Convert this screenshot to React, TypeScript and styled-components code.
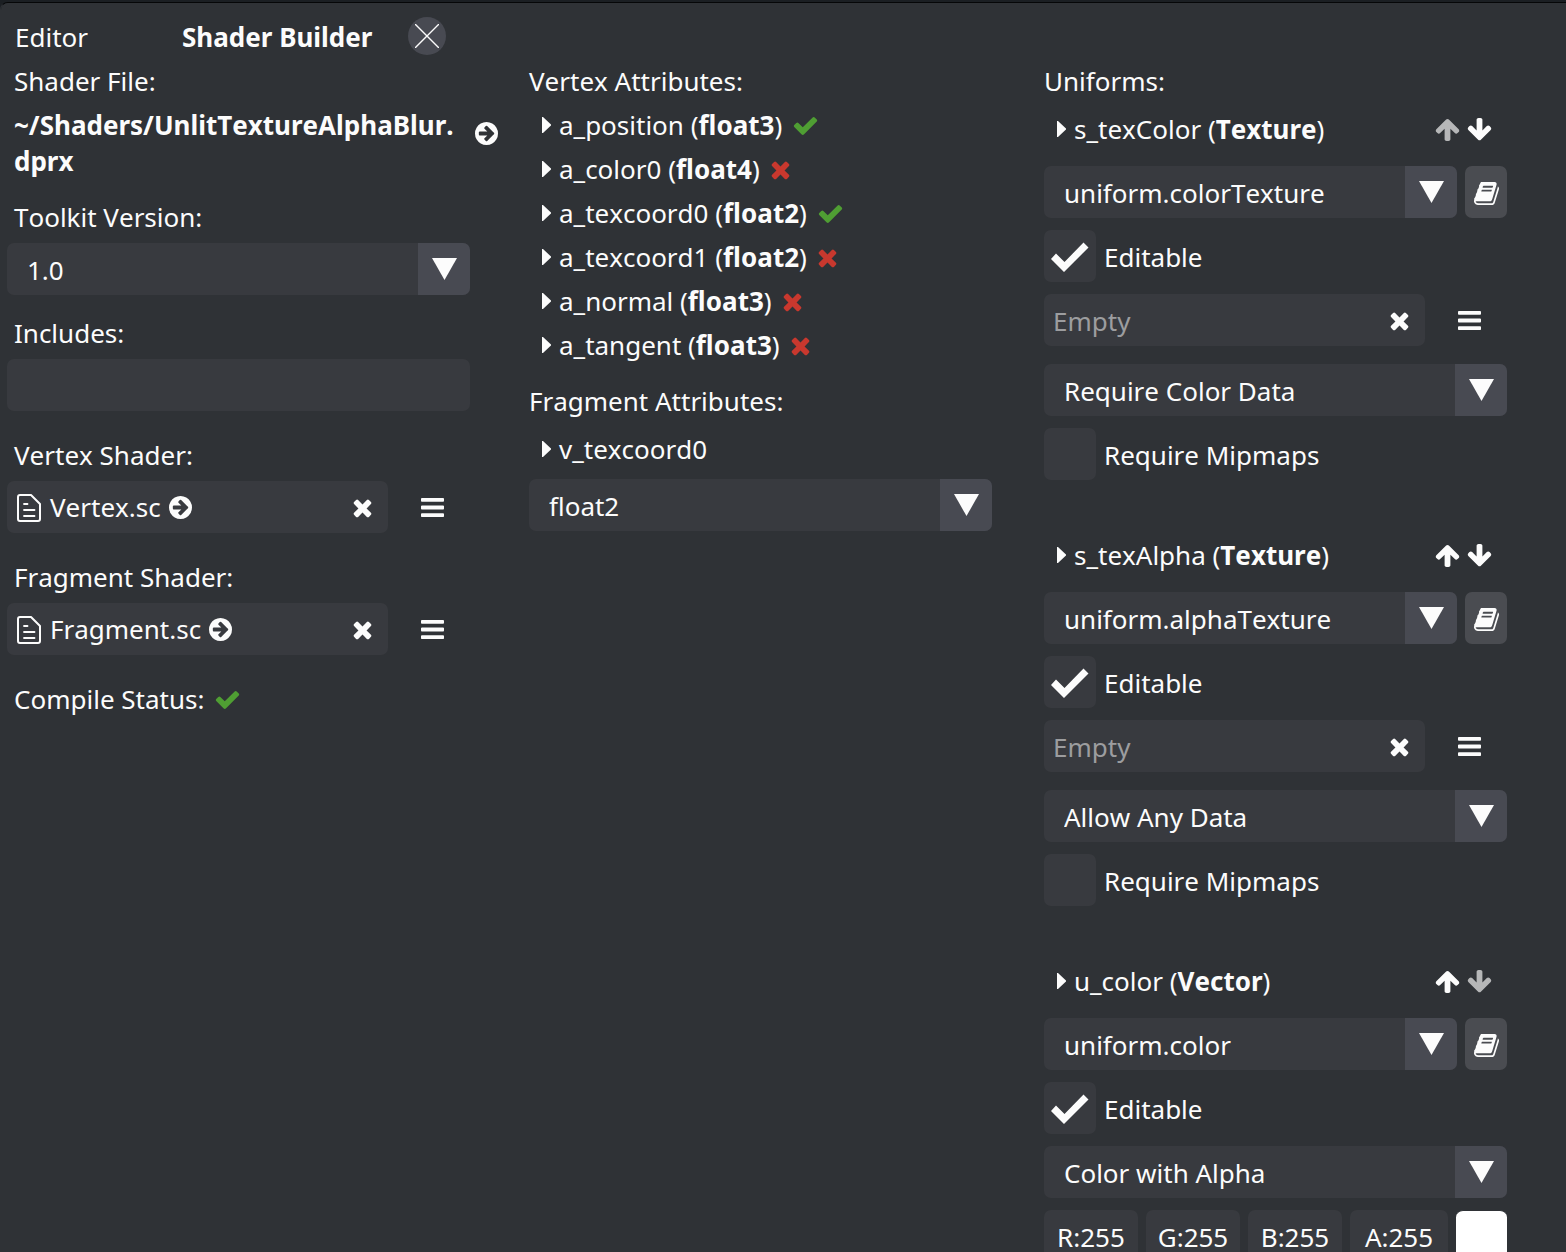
import React, { useId, useState } from "react";
import styled, { createGlobalStyle } from "styled-components";

const color = {
  frame: "#1b1f23",
  edge: "#060708",
  panel: "#2f3236",
  field: "#383a3f",
  arrow: "#484a52",
  button: "#4a4c51",
  text: "#fcfcfc",
  muted: "#9c9d9f",
  ok: "#4f9e33",
  bad: "#c8382e",
};

const GlobalStyle = createGlobalStyle`
  *, *::before, *::after { box-sizing: border-box; }
  body { margin: 0; background: ${color.frame}; }
  body, button, input, select {
    font: 400 26px/36px "Noto Sans", "Open Sans", sans-serif;
    font-kerning: none;
    color: ${color.text};
  }
`;

/* ---------- icons ---------- */

const glyphs = {
  check: {
    box: "0 0 1792 1792",
    width: 27,
    d: "M1671 566q0 40-28 68l-724 724-136 136q-28 28-68 28t-68-28l-136-136-362-362q-28-28-28-68t28-68l136-136q28-28 68-28t68 28l294 295 656-657q28-28 68-28t68 28l136 136q28 28 28 68z",
  },
  times: {
    box: "192 0 1408 1792",
    width: 21,
    d: "M1490 1322q0 40-28 68l-136 136q-28 28-68 28t-68-28l-294-294-294 294q-28 28-68 28t-68-28l-136-136q-28-28-28-68t28-68l294-294-294-294q-28-28-28-68t28-68l136-136q28-28 68-28t68 28l294 294 294-294q28-28 68-28t68 28l136 136q28 28 28 68t-28 68l-294 294 294 294q28 28 28 68z",
  },
  goto: {
    box: "128 0 1536 1792",
    width: 23,
    d: "M1413 896q0-27-18-45l-91-91-362-362q-18-18-45-18t-45 18l-91 91q-18 18-18 45t18 45l189 189h-502q-26 0-45 19t-19 45v128q0 26 19 45t45 19h502l-189 189q-19 19-19 45t19 45l91 91q18 18 45 18t45-18l362-362 91-91q18-18 18-45zm251 0q0 209-103 385.5t-279.5 279.5-385.5 103-385.5-103-279.5-279.5-103-385.5 103-385.5 279.5-279.5 385.5-103 385.5 103 279.5 279.5 103 385.5z",
  },
  bars: {
    box: "128 0 1536 1792",
    width: 23,
    d: "M1664 1344v128q0 26-19 45t-45 19h-1408q-26 0-45-19t-19-45v-128q0-26 19-45t45-19h1408q26 0 45 19t19 45zm0-512v128q0 26-19 45t-45 19h-1408q-26 0-45-19t-19-45v-128q0-26 19-45t45-19h1408q26 0 45 19t19 45zm0-512v128q0 26-19 45t-45 19h-1408q-26 0-45-19t-19-45v-128q0-26 19-45t45-19h1408q26 0 45 19t19 45z",
  },
  up: {
    box: "0 0 1792 1792",
    width: 27,
    d: "M1675 971q0 51-37 90l-75 75q-38 38-91 38-54 0-90-38l-294-293v704q0 52-37.5 84.5t-90.5 32.5h-128q-53 0-90.5-32.5t-37.5-84.5v-704l-294 293q-36 38-90 38t-90-38l-75-75q-38-38-38-90 0-53 38-91l651-651q35-37 90-37 54 0 91 37l651 651q37 39 37 91z",
  },
  down: {
    box: "0 0 1792 1792",
    width: 27,
    d: "M1675 832q0 53-37 90l-651 652q-39 37-91 37-53 0-90-37l-651-652q-38-36-38-90 0-53 38-91l74-75q39-37 91-37 53 0 90 37l294 294v-704q0-52 38-90t90-38h128q52 0 90 38t38 90v704l294-294q37-37 90-37 52 0 91 37l75 75q37 39 37 91z",
  },
  book: {
    box: "0 0 1792 1792",
    width: 27,
    d: "M1703 478q40 57 18 129l-275 906q-19 64-76.5 107.5t-122.5 43.5h-923q-77 0-148.5-53.5t-99.5-131.5q-24-67-2-127 0-4 3-27t4-37q1-8-3-21.5t-3-19.5q2-11 8-21t16.5-23.5 16.5-23.5q23-38 45-91.5t30-91.5q3-10 .5-30t-.5-28q3-11 17-28t17-23q21-36 42-92t25-90q1-9-2.5-32t.5-28q4-13 22-30.5t22-22.5q19-26 42.5-84.5t27.5-96.5q1-8-3-25.5t-2-26.5q2-8 9-18t18-23 17-21q8-12 16.5-30.5t15-35 16-36 19.5-32 26.5-23.5 36-11.5 47.5 5.5l-1 3q38-9 51-9h761q74 0 114 56t18 130l-274 906q-36 119-71.5 153.5t-128.5 34.5h-869q-27 0-38 15-11 16-1 43 24 70 144 70h923q29 0 56-15.5t35-41.5l300-987q7-22 5-57 38 15 59 43zm-1064 2q-4 13 2 22.5t20 9.5h608q13 0 25.5-9.5t16.5-22.5l21-64q4-13-2-22.5t-20-9.5h-608q-13 0-25.5 9.5t-16.5 22.5zm-83 256q-4 13 2 22.5t20 9.5h608q13 0 25.5-9.5t16.5-22.5l21-64q4-13-2-22.5t-20-9.5h-608q-13 0-25.5 9.5t-16.5 22.5z",
  },
};

const Svg = styled.svg`
  display: block;
  flex: none;
  fill: currentColor;
`;

const StatusSvg = styled(Svg)<{ $ok: boolean }>`
  margin-left: 2px;
  color: ${(p) => (p.$ok ? color.ok : color.bad)};
`;

function Icon({ name }: { name: keyof typeof glyphs }) {
  const g = glyphs[name];
  return (
    <Svg viewBox={g.box} width={g.width} height={27} aria-hidden>
      <path d={g.d} />
    </Svg>
  );
}

function Status({ ok }: { ok: boolean }) {
  const g = ok ? glyphs.check : glyphs.times;
  return (
    <StatusSvg $ok={ok} viewBox={g.box} width={g.width} height={27} role="img" aria-label={ok ? "OK" : "Missing"}>
      <path d={g.d} />
    </StatusSvg>
  );
}

const FileIcon = () => (
  <Svg viewBox="0 0 26 30" width={26} height={30} aria-hidden>
    <g fill="none" stroke="currentColor" strokeWidth="2" strokeLinecap="round" strokeLinejoin="round">
      <path d="M4 3H15L24 12V27a2 2 0 0 1-2 2H4a2 2 0 0 1-2-2V5a2 2 0 0 1 2-2z" />
      <path d="M8 12H11.500M8 18H18.500M8 24H18.500" strokeWidth="1.800" />
    </g>
  </Svg>
);

const Caret = () => (
  <Svg viewBox="0 0 9 16" width={9} height={16} aria-hidden>
    <path d="M0 0L1 0L9 7.500V8.500L1 16H0z" />
  </Svg>
);

const Triangle = () => (
  <Svg viewBox="0 0 25 22" width={25} height={22} aria-hidden>
    <path d="M0 0H25L12.500 22z" />
  </Svg>
);

/* ---------- controls ---------- */

const IconButton = styled.button`
  display: inline-flex;
  align-items: center;
  justify-content: center;
  flex: none;
  padding: 0;
  border: 0;
  background: none;
  cursor: pointer;

  &:disabled {
    color: ${color.text};
    opacity: 0.66;
    cursor: default;
  }
`;

const Label = styled.label`
  display: block;
`;

const Caption = styled.h2`
  margin: 0;
  font: inherit;
  font-kerning: none;
`;

const SelectBox = styled.div`
  display: grid;
  flex: 1;
  grid-template-columns: 1fr 52px;
  height: 52px;
  border-radius: 7px;
  background: ${color.field};
  overflow: hidden;
`;

const NativeSelect = styled.select`
  grid-area: 1 / 1 / 2 / 3;
  min-width: 0;
  padding: 2px 60px 0 20px;
  border: 0;
  background: none;
  appearance: none;

  option {
    background: ${color.field};
  }
`;

const SelectArrow = styled.span`
  grid-area: 1 / 2;
  display: grid;
  place-items: center;
  background: ${color.arrow};
  pointer-events: none;
`;

function Select({ value, id, label }: { value: string; id?: string; label?: string }) {
  return (
    <SelectBox>
      <NativeSelect id={id} aria-label={label} defaultValue={value}>
        <option>{value}</option>
      </NativeSelect>
      <SelectArrow>
        <Triangle />
      </SelectArrow>
    </SelectBox>
  );
}

const TextInput = styled.input`
  width: 100%;
  height: 52px;
  padding: 0 8px;
  border: 0;
  border-radius: 7px;
  background: ${color.field};
`;

const FileRow = styled.div`
  display: grid;
  grid-template-columns: 1fr 75px;
  gap: 7px;
`;

const FileField = styled.div`
  display: flex;
  align-items: center;
  gap: 8px;
  height: 52px;
  padding: 0 15px 0 9px;
  border-radius: 7px;
  background: ${color.field};
`;

const EmptyText = styled.span`
  padding-top: 2px;
  color: ${color.muted};
`;

const ClearButton = styled(IconButton)`
  margin-left: auto;
`;

function FilePicker({ file }: { file?: string }) {
  return (
    <FileRow>
      <FileField>
        {file ? (
          <>
            <FileIcon />
            <span>{file}</span>
            <IconButton aria-label={`Go to ${file}`}>
              <Icon name="goto" />
            </IconButton>
          </>
        ) : (
          <EmptyText>Empty</EmptyText>
        )}
        <ClearButton aria-label="Clear">
          <Icon name="times" />
        </ClearButton>
      </FileField>
      <IconButton aria-label="Choose file">
        <Icon name="bars" />
      </IconButton>
    </FileRow>
  );
}

const CheckRow = styled.label`
  display: flex;
  align-items: center;
  gap: 8px;
`;

const CheckText = styled.span`
  padding-top: 2px;
`;

const CheckBox = styled.span`
  display: grid;
  width: 52px;
  height: 52px;
`;

const CheckInput = styled.input`
  grid-area: 1 / 1;
  margin: 0;
  border-radius: 7px;
  background: ${color.field};
  appearance: none;
`;

const CheckMark = styled(Svg)`
  grid-area: 1 / 1;
  visibility: hidden;
  pointer-events: none;

  ${CheckInput}:checked + & {
    visibility: visible;
  }
`;

function Check({ label, checked }: { label: string; checked?: boolean }) {
  return (
    <CheckRow>
      <CheckBox>
        <CheckInput type="checkbox" defaultChecked={checked} />
        <CheckMark viewBox="0 0 52 52" width={52} height={52} aria-hidden>
          <path d="M7 29L12 23.500L20.500 32L39.500 12.500L44.500 17.500L20 42z" />
        </CheckMark>
      </CheckBox>
      <CheckText>{label}</CheckText>
    </CheckRow>
  );
}

const TreeButton = styled.button`
  display: flex;
  align-items: center;
  gap: 8px;
  padding: 0 0 0 13px;
  border: 0;
  background: none;
  text-align: left;
  white-space: nowrap;
  cursor: pointer;
`;

function TreeItem({ name, type, children }: { name: string; type?: string; children?: React.ReactNode }) {
  const [open, setOpen] = useState(false);
  return (
    <TreeButton aria-expanded={open} onClick={() => setOpen(!open)}>
      <Caret />
      <span>
        {name}
        {type && (
          <>
            {" "}
            (<b>{type}</b>)
          </>
        )}
      </span>
      {children}
    </TreeButton>
  );
}

/* ---------- layout ---------- */

const Panel = styled.main`
  height: calc(100vh - 2px);
  margin-top: 2px;
  border-top: 1px solid ${color.edge};
  border-left: 1px solid ${color.panel};
  border-top-left-radius: 8px;
  background: ${color.panel};
  overflow-y: auto;
  scrollbar-width: none;
`;

const Tabs = styled.nav`
  display: flex;
  align-items: center;
  padding: 16px 14px 8px;
`;

const Tab = styled.button<{ $active?: boolean }>`
  padding: 0;
  border: 0;
  margin-right: ${(p) => (p.$active ? "36px" : "94px")};
  background: none;
  font-weight: ${(p) => (p.$active ? 700 : 400)};
`;

const CloseTab = styled(IconButton)`
  width: 38px;
  height: 38px;
  margin: -3px 0 -1px;
  border-radius: 50%;
  background: ${color.arrow};
`;

const Columns = styled.div`
  display: grid;
  grid-template-columns: repeat(3, minmax(0, 1fr));
  padding: 0 7px 0 13px;
`;

const Column = styled.section`
  display: flex;
  flex-direction: column;
  padding-right: 52px;
`;

const PathRow = styled.div`
  display: flex;
  align-items: flex-start;
  gap: 6px;
  margin: 8px -21px 20px 0;
`;

const Path = styled.strong`
  flex: 1;
  overflow-wrap: anywhere;
`;

const PathLink = styled(IconButton)`
  height: 52px;
`;

const FieldGroup = styled.div<{ $tight?: boolean }>`
  display: flex;
  flex-direction: column;
  gap: 8px;
  margin: 0 7px ${(p) => (p.$tight ? "20px" : "26px")} -7px;

  > ${Label}, > ${Caption} {
    padding-left: 7px;
  }
`;

const SelectLine = styled.div`
  display: flex;
  gap: 8px;
`;

const StatusLine = styled.div`
  display: flex;
  align-items: center;
  gap: 8px;
`;

const AttributeList = styled.div<{ $gap: number }>`
  display: flex;
  flex-direction: column;
  gap: ${(p) => p.$gap}px;
  margin-bottom: 20px;
`;

const Uniform = styled.article`
  display: flex;
  flex-direction: column;
  gap: 12px;
  margin: 12px 0 45px;
`;

const UniformHeader = styled.header`
  display: flex;
  align-items: center;
  justify-content: space-between;
  padding: 0 14px 7px 0;
`;

const MoveButtons = styled.div`
  display: flex;
  gap: 5px;
`;

const BookButton = styled(IconButton)`
  width: 42px;
  height: 52px;
  padding-top: 2px;
  border-radius: 7px;
  background: ${color.button};
`;

const DefaultValue = styled.div`
  padding-bottom: 6px;
`;

const Channels = styled.div`
  display: grid;
  grid-template-columns: repeat(3, 1fr) 98px 51px;
  gap: 8px;
`;

const ChannelInput = styled(TextInput)`
  padding: 2px 0 0;
  text-align: center;
`;

const Swatch = styled(IconButton)`
  border: 1px solid ${color.panel};
  border-width: 1px 0;
  border-radius: 7px;
  background: #fff;
`;

const attributes = [
  { name: "a_position", type: "float3", ok: true },
  { name: "a_color0", type: "float4", ok: false },
  { name: "a_texcoord0", type: "float2", ok: true },
  { name: "a_texcoord1", type: "float2", ok: false },
  { name: "a_normal", type: "float3", ok: false },
  { name: "a_tangent", type: "float3", ok: false },
];

type UniformData = {
  name: string;
  type: "Texture" | "Vector";
  binding: string;
  mode: string;
};

const uniforms: UniformData[] = [
  { name: "s_texColor", type: "Texture", binding: "uniform.colorTexture", mode: "Require Color Data" },
  { name: "s_texAlpha", type: "Texture", binding: "uniform.alphaTexture", mode: "Allow Any Data" },
  { name: "u_color", type: "Vector", binding: "uniform.color", mode: "Color with Alpha" },
];

function UniformEditor({ data, first, last }: { data: UniformData; first: boolean; last: boolean }) {
  const texture = data.type === "Texture";
  return (
    <Uniform>
      <UniformHeader>
        <TreeItem name={data.name} type={data.type} />
        <MoveButtons>
          <IconButton aria-label={`Move ${data.name} up`} disabled={first}>
            <Icon name="up" />
          </IconButton>
          <IconButton aria-label={`Move ${data.name} down`} disabled={last}>
            <Icon name="down" />
          </IconButton>
        </MoveButtons>
      </UniformHeader>
      <SelectLine>
        <Select value={data.binding} label={`${data.name} binding`} />
        <BookButton aria-label="Documentation">
          <Icon name="book" />
        </BookButton>
      </SelectLine>
      <Check label="Editable" checked />
      {texture && (
        <DefaultValue>
          <FilePicker />
        </DefaultValue>
      )}
      <SelectLine>
        <Select value={data.mode} label={`${data.name} data`} />
      </SelectLine>
      {texture ? (
        <Check label="Require Mipmaps" />
      ) : (
        <Channels>
          {["R", "G", "B", "A"].map((c) => (
            <ChannelInput key={c} aria-label={c} defaultValue={`${c}:255`} />
          ))}
          <Swatch aria-label="Pick color" />
        </Channels>
      )}
    </Uniform>
  );
}

export default function App() {
  const toolkitId = useId();
  const includesId = useId();
  return (
    <>
      <GlobalStyle />
      <Panel>
        <Tabs>
          <Tab>Editor</Tab>
          <Tab $active>Shader Builder</Tab>
          <CloseTab aria-label="Close tab">
            <Svg viewBox="0 0 24 24" width={24} height={24} aria-hidden>
              <path d="M0 0L24 24M24 0L0 24" stroke="currentColor" strokeWidth="1.400" />
            </Svg>
          </CloseTab>
        </Tabs>
        <Columns>
          <Column>
            <Caption>Shader File:</Caption>
            <PathRow>
              <Path>~/Shaders/UnlitTextureAlphaBlur.<wbr />dprx</Path>
              <PathLink aria-label="Go to shader file">
                <Icon name="goto" />
              </PathLink>
            </PathRow>
            <FieldGroup $tight>
              <Label htmlFor={toolkitId}>Toolkit Version:</Label>
              <SelectLine>
                <Select id={toolkitId} value="1.0" />
              </SelectLine>
            </FieldGroup>
            <FieldGroup>
              <Label htmlFor={includesId}>Includes:</Label>
              <TextInput id={includesId} />
            </FieldGroup>
            <FieldGroup>
              <Caption>Vertex Shader:</Caption>
              <FilePicker file="Vertex.sc" />
            </FieldGroup>
            <FieldGroup>
              <Caption>Fragment Shader:</Caption>
              <FilePicker file="Fragment.sc" />
            </FieldGroup>
            <StatusLine>
              Compile Status: <Status ok />
            </StatusLine>
          </Column>
          <Column>
            <AttributeList $gap={8}>
              <Caption>Vertex Attributes:</Caption>
              {attributes.map((a) => (
                <TreeItem key={a.name} name={a.name} type={a.type}>
                  <Status ok={a.ok} />
                </TreeItem>
              ))}
            </AttributeList>
            <AttributeList $gap={12}>
              <Caption>Fragment Attributes:</Caption>
              <TreeItem name="v_texcoord0" />
              <SelectLine>
                <Select value="float2" label="v_texcoord0 type" />
              </SelectLine>
            </AttributeList>
          </Column>
          <Column>
            <Caption>Uniforms:</Caption>
            {uniforms.map((u, i) => (
              <UniformEditor key={u.name} data={u} first={i === 0} last={i === uniforms.length - 1} />
            ))}
          </Column>
        </Columns>
      </Panel>
    </>
  );
}
